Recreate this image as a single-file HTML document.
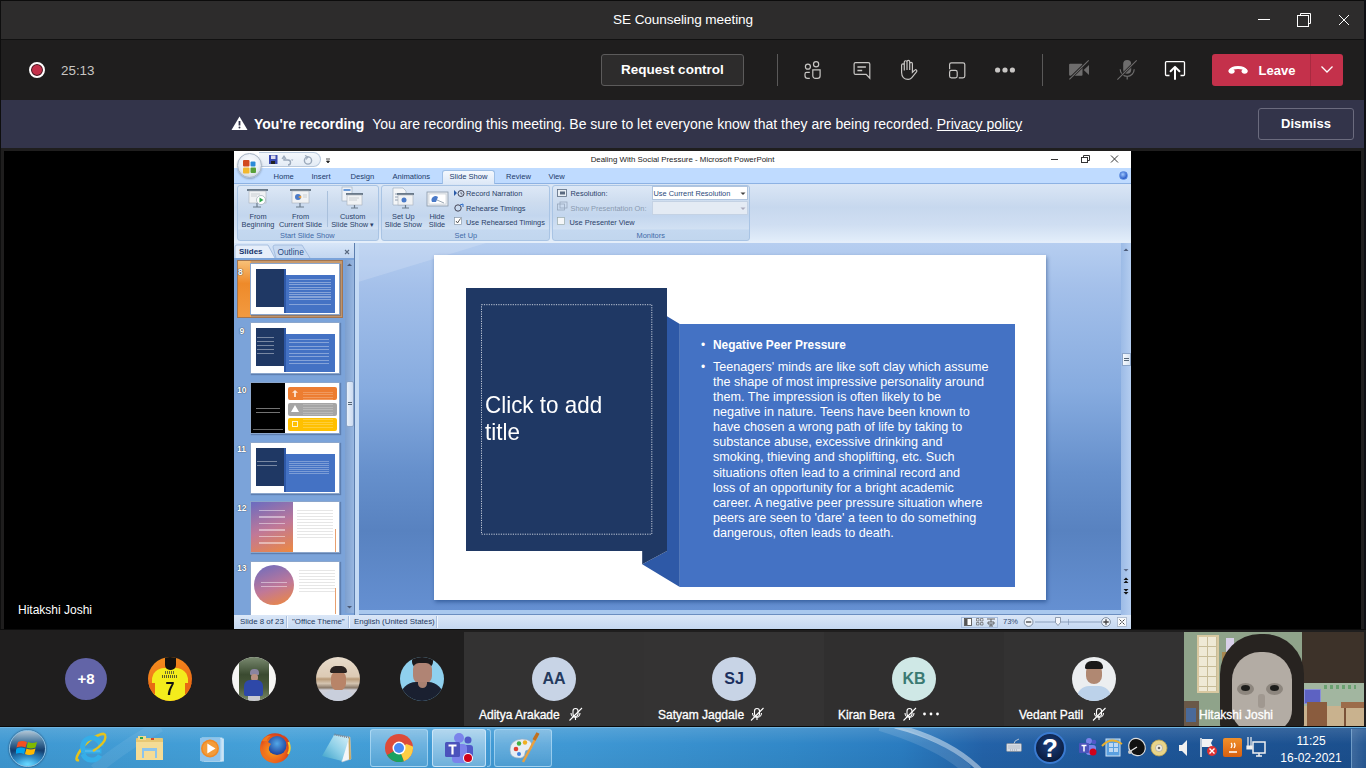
<!DOCTYPE html>
<html><head><meta charset="utf-8">
<style>
*{margin:0;padding:0;box-sizing:border-box}
html,body{width:1366px;height:768px;overflow:hidden;background:#1f1e1e;font-family:"Liberation Sans",sans-serif}
.a{position:absolute}
#title{left:0;top:0;width:1366px;height:40px;background:#2d2c2c;border-bottom:1px solid #111}
#title .t{left:0;width:1366px;top:12px;text-align:center;color:#fff;font-size:13.6px;letter-spacing:-0.1px}
#tool{left:0;top:40px;width:1366px;height:60px;background:#1f1e1e}
.btn{border:1px solid #5c5b5b;background:#2d2c2c;border-radius:3px;color:#fff;font-weight:bold;font-size:14px;text-align:center}
.div{width:1px;background:#5a5959}
#banner{left:0;top:100px;width:1366px;height:48px;background:#33344a}
#stage{left:4px;top:151px;width:1357px;height:478px;background:#000}
#strip{left:0;top:629px;width:1366px;height:99px;background:#1f1e1e;border-top:1px solid #0c0c0c}
.tile{top:632px;height:94px;width:180px;background:#333232}
.nm{color:#fff;font-size:12px;top:708px;-webkit-text-stroke:0.3px #fff}
.av{width:44px;height:44px;border-radius:50%;top:657px;text-align:center;line-height:44px;font-size:17px}
#task{left:0;top:727px;width:1366px;height:41px}
</style></head><body>
<div id="title" class="a"><div class="t a">SE Counseling meeting</div>
<svg class="a" style="left:1250px;top:0" width="116" height="40">
<line x1="8" y1="19.5" x2="20" y2="19.5" stroke="#fff" stroke-width="1"/>
<rect x="47.5" y="15.5" width="11" height="11" fill="none" stroke="#fff" stroke-width="1"/>
<path d="M50.5 15.5 V13.5 H60.5 V23.5 H58.5" fill="none" stroke="#fff" stroke-width="1"/>
<path d="M89 15 L99 25 M99 15 L89 25" stroke="#fff" stroke-width="1"/>
</svg>
</div>
<div id="tool" class="a">
<div class="a" style="left:29px;top:22px;width:16px;height:16px;border-radius:50%;border:2px solid #fff;background:#c4314b;box-shadow:inset 0 0 0 1px #3a1a20"></div>
<div class="a" style="left:61px;top:22.5px;color:#c8c6c4;font-size:13.4px">25:13</div>
<div class="a btn" style="left:601px;top:14px;width:143px;height:32px;line-height:30px;font-size:13.5px">Request control</div>
<div class="a div" style="left:777px;top:14px;height:32px"></div>
<svg class="a" style="left:789.2px;top:10px" width="240" height="40" fill="none" stroke="#c8c6c4" stroke-width="1.2">
<circle cx="18.9" cy="16.7" r="2.5"/><circle cx="27.1" cy="14.25" r="2.6"/>
<path d="M20.8 22.3 H17.6 a1.6 1.6 0 0 0 -1.6 1.6 V25.8 a2.6 2.6 0 0 0 2.6 2.6 H20.8"/>
<path d="M23.8 19.9 H31.1 V25.8 a2.6 2.6 0 0 1 -2.6 2.6 H26.4 a2.6 2.6 0 0 1 -2.6 -2.6 Z"/>
<path d="M65.1 14.1 a1.5 1.5 0 0 1 1.5 -1.5 h12.7 a1.5 1.5 0 0 1 1.5 1.5 V28.2 l-3.6 -3.8 H66.6 a1.5 1.5 0 0 1 -1.5 -1.5 Z"/>
<path d="M68.4 17 h8.5 M68.4 20.5 h4.8" stroke-width="1.3"/>
<path d="M119.2 29.4 C115.2 29.4 112.6 26.6 112.6 22.5 V15.3 a1.35 1.35 0 0 1 2.7 0 V20.5 M115.3 15.3 V12.1 a1.35 1.35 0 0 1 2.7 0 V20 M118 12.1 V11.7 a1.35 1.35 0 0 1 2.7 0 V20 M120.7 11.7 V13.7 a1.35 1.35 0 0 1 2.7 0 V22.3 l2.4 -2.2 a1.2 1.2 0 0 1 1.7 1.7 L122.6 27.8 C121.7 28.9 120.6 29.4 119.2 29.4"/>
<path d="M160.6 19.2 V14.6 a1.8 1.8 0 0 1 1.8 -1.8 H174 a1.8 1.8 0 0 1 1.8 1.8 V26 a1.8 1.8 0 0 1 -1.8 1.8 H169.8"/>
<rect x="160.6" y="20.4" width="7.6" height="7.4" rx="1.8"/>
<circle cx="208.6" cy="20" r="2.6" fill="#c8c6c4" stroke="none"/><circle cx="216" cy="20" r="2.6" fill="#c8c6c4" stroke="none"/><circle cx="223.4" cy="20" r="2.6" fill="#c8c6c4" stroke="none"/>
</svg>
<div class="a div" style="left:1042px;top:14px;height:32px"></div>
<svg class="a" style="left:1060px;top:10px" width="140" height="40">
<rect x="9.1" y="13.8" width="13.4" height="12" rx="1" fill="#6e6d6d"/>
<path d="M23.7 20 L29 15 V24.9 Z" fill="#6e6d6d"/>
<path d="M9.4 29.3 L28.7 10.3" stroke="#1f1e1e" stroke-width="2.6"/><path d="M9.4 29.3 L28.7 10.3" stroke="#6e6d6d" stroke-width="1.1"/>
<rect x="63.2" y="10" width="8" height="13.7" rx="4" fill="#6e6d6d"/>
<path d="M60.2 19.3 a7 7 0 0 0 14 0 M67.2 26.3 V29.6" fill="none" stroke="#6e6d6d" stroke-width="1.2"/>
<path d="M57.4 29.6 L76.7 10.3" stroke="#1f1e1e" stroke-width="2.6"/><path d="M57.4 29.6 L76.7 10.3" stroke="#6e6d6d" stroke-width="1.1"/>
<path d="M109.5 25.5 H106.5 a1 1 0 0 1 -1 -1 V12.6 a1 1 0 0 1 1 -1 H123.5 a1 1 0 0 1 1 1 V24.5 a1 1 0 0 1 -1 1 H120.5" fill="none" stroke="#fff" stroke-width="1.3"/>
<path d="M115 29 V17.5 M110.6 21.3 L115 16.9 L119.4 21.3" fill="none" stroke="#fff" stroke-width="2" stroke-linecap="round" stroke-linejoin="round"/>
</svg>
<div class="a" style="left:1212px;top:14px;width:131px;height:32px;background:#c4314b;border-radius:3px"></div>
<div class="a" style="left:1310px;top:14px;width:1px;height:32px;background:#a82a40"></div>
<svg class="a" style="left:1225px;top:9.5px" width="30" height="32">
<path d="M5.2 20.5 C7.5 16.5 18.5 16.5 20.8 20.5" fill="none" stroke="#fff" stroke-width="3.2" stroke-linecap="round"/>
<ellipse cx="6.6" cy="21.3" rx="3" ry="2.4" fill="#fff"/><ellipse cx="19.6" cy="21.3" rx="3" ry="2.4" fill="#fff"/>
</svg>
<div class="a" style="left:1258.5px;top:22.5px;color:#fff;font-weight:bold;font-size:13px">Leave</div>
<svg class="a" style="left:1318px;top:22px" width="18" height="16"><path d="M3.5 4.5 l5.5 5.5 l5.5 -5.5" fill="none" stroke="#fff" stroke-width="1.3"/></svg>
</div>
<div id="banner" class="a">
<svg class="a" style="left:231px;top:16px" width="17" height="15"><path d="M8.5 0.5 L16.5 14 H0.5 Z" fill="#fff"/><path d="M8.5 5 v4.5" stroke="#33344a" stroke-width="1.8"/><circle cx="8.5" cy="11.5" r="1" fill="#33344a"/></svg>
<div class="a" style="left:254px;top:16px;color:#fff;font-size:14px;white-space:nowrap"><b>You're recording</b>&nbsp;&nbsp;You are recording this meeting. Be sure to let everyone know that they are being recorded. <u>Privacy policy</u></div>
<div class="a btn" style="left:1258px;top:8px;width:96px;height:32px;line-height:30px;font-size:13px;background:#33344a;border-color:#6b6b7e">Dismiss</div>
</div>
<div id="stage" class="a"></div>
<div class="a" style="left:0;top:0;width:1366px;height:1px;background:#0c0c0c"></div>
<div class="a" style="left:0;top:0;width:1px;height:728px;background:#0e0e0e"></div>
<div class="a" style="left:1364px;top:0;width:2px;height:728px;background:#0e0f14"></div>
<div class="a" style="left:18px;top:603px;color:#fff;font-size:12px">Hitakshi Joshi</div>
<div id="ppt" class="a" style="left:234px;top:151px;width:897px;height:478px;background:#c4d6ee;overflow:hidden;font-family:'Liberation Sans',sans-serif;color:#15428b">
<style>
#ppt .a{position:absolute}
#ppt .tb{font-size:7.6px;top:20.6px;color:#203a6a;white-space:nowrap}
#ppt .rl{font-size:7.4px;color:#2a3f68;white-space:nowrap;line-height:8px}
#ppt .grp{top:34px;height:56px;border:1px solid #a9c4e4;border-radius:3px;background:linear-gradient(#dde8f6 0,#cddcef 30%,#c3d6ee 55%,#d2e1f3 80%,#c4d8f0 81%,#c1d6ee 100%)}
#ppt .gl{font-size:7.4px;color:#3f6aa8;top:80px;white-space:nowrap}
#ppt .th{background:#fff;border:1px solid #8ba6cc;box-shadow:1px 1px 1px rgba(40,60,100,0.35);width:90px;height:52px;left:16px;overflow:hidden}
#ppt .num{left:5px;font-size:8.6px;font-weight:bold;color:#fff;text-shadow:0 0 1px #345,0 0 1px #345}
#ppt .bl{white-space:nowrap;color:#fff;font-size:12.6px;line-height:15.15px;left:479px}
</style>
<!-- title bar -->
<div class="a" style="left:0;top:0;width:897px;height:17px;background:#fff"></div>
<div class="a" style="top:4px;width:897px;text-align:center;font-size:7.9px;color:#1a1a1a;left:0px">Dealing With Social Pressure - Microsoft PowerPoint</div>
<svg class="a" style="left:810px;top:0" width="87" height="17">
<path d="M7 8.5 h7" stroke="#333" stroke-width="1"/>
<rect x="37.5" y="6.5" width="6" height="5" fill="none" stroke="#333"/><path d="M39.5 6.5 v-2 h6 v5 h-2" fill="none" stroke="#333"/>
<path d="M67 4.5 l7 7 M74 4.5 l-7 7" stroke="#333" stroke-width="1"/>
</svg>
<!-- tab bar -->
<div class="a" style="left:0;top:17px;width:897px;height:16px;background:#bfdbff;border-bottom:1px solid #8db2e3"></div>
<div class="a" style="left:208px;top:19px;width:53px;height:15px;background:linear-gradient(#f4f8fd,#dbe7f6);border:1px solid #9ebfe6;border-bottom:none;border-radius:3px 3px 0 0"></div>
<div class="a tb" style="left:39.5px">Home</div>
<div class="a tb" style="left:77.5px">Insert</div>
<div class="a tb" style="left:116.5px">Design</div>
<div class="a tb" style="left:158.5px">Animations</div>
<div class="a tb" style="left:215.5px">Slide Show</div>
<div class="a tb" style="left:272px">Review</div>
<div class="a tb" style="left:314.5px">View</div>
<div class="a" style="left:885px;top:20px;width:9px;height:9px;border-radius:50%;background:radial-gradient(circle at 40% 35%,#9fc8ff,#2a5cc8 70%);border:1px solid #5a8ae0"></div>
<!-- QAT -->
<div class="a" style="left:25px;top:1px;width:62px;height:15px;border:1px solid #b9c9dc;border-left:none;border-radius:0 8px 8px 0;background:linear-gradient(#f4f8fc,#e4ecf6)"></div>
<svg class="a" style="left:34px;top:3px" width="62" height="12">
<rect x="1" y="1" width="8.5" height="9" fill="#3a4ab0"/><rect x="3" y="1.5" width="4.5" height="3.5" fill="#dde"/><rect x="3" y="7" width="4" height="3" fill="#222"/>
<path d="M16 3 v3 h4 a2.5 2.5 0 0 1 0 5" fill="none" stroke="#9aa8ba" stroke-width="1.4"/><path d="M14 5 l2 -3 l2 3" fill="none" stroke="#9aa8ba" stroke-width="1.2"/>
<path d="M23 5.5 l1.2 1.5 l1.2 -1.5z" fill="#9aa8ba"/>
<circle cx="40" cy="6.5" r="3.6" fill="none" stroke="#9aa8ba" stroke-width="1.4"/><path d="M37 1.5 l3 1.5 l-2 2.5" fill="none" stroke="#9aa8ba" stroke-width="1.2"/>
<path d="M58 5 h4 M58.5 7 l1.5 2 l1.5 -2z" stroke="#222" fill="#222" stroke-width="0.8"/>
</svg>
<!-- office orb -->
<div class="a" style="left:3px;top:2px;width:25px;height:25px;border-radius:50%;background:radial-gradient(circle at 50% 40%,#fff 0,#eef2f8 50%,#b8c4d2 100%);border:1px solid #a8b4c4;box-shadow:0 1px 2px rgba(0,0,0,0.25)"></div>
<svg class="a" style="left:8px;top:8px" width="16" height="16">
<rect x="1" y="1" width="6.5" height="6.5" rx="1" fill="#d2491e"/><rect x="8.5" y="2.5" width="5" height="5" rx="1" fill="#2a8ad8"/>
<rect x="1" y="8.5" width="6.5" height="6" rx="1" fill="#f2b830"/><rect x="8.5" y="8.5" width="5.5" height="5.5" rx="1" fill="#58a038"/>
</svg>
<!-- ribbon -->
<div class="a" style="left:0;top:33px;width:897px;height:58px;background:linear-gradient(#dae6f5 0,#c7d8ee 40%,#cfdef2 70%,#e3eefa 100%)"></div>
<div class="a grp" style="left:2.5px;width:142px"></div>
<div class="a grp" style="left:146.5px;width:169.5px"></div>
<div class="a grp" style="left:318px;width:197.5px"></div>
<div class="a" style="left:93px;top:40px;width:1px;height:36px;background:#a9c0dc"></div>
<div class="a gl" style="left:46px">Start Slide Show</div>
<div class="a gl" style="left:220.5px">Set Up</div>
<div class="a gl" style="left:402.5px">Monitors</div>
<svg class="a" style="left:0;top:33px" width="520" height="45">
 <!-- from beginning -->
 <g transform="translate(13,4)"><rect x="0" y="1" width="21" height="2" fill="#6a7a8a"/><rect x="2" y="3" width="17" height="12" fill="#f0f2f4" stroke="#a8b0b8" stroke-width="0.6"/><path d="M4 6h9M4 8h6" stroke="#c0c6cc" stroke-width="0.8"/><path d="M10 15 v4 M6 19 h8" stroke="#6a7a8a" stroke-width="1.2"/><circle cx="14" cy="12" r="4.5" fill="#fff" stroke="#8a9aaa" stroke-width="0.6"/><path d="M12.5 9.5 l4 2.5 l-4 2.5z" fill="#2ea84a"/></g>
 <!-- from current -->
 <g transform="translate(56,4)"><rect x="0" y="1" width="21" height="2" fill="#6a7a8a"/><rect x="2" y="3" width="17" height="12" fill="#f0f2f4" stroke="#a8b0b8" stroke-width="0.6"/><circle cx="8" cy="9" r="3" fill="#4a7ac8"/><path d="M8 9 l3 -1.5 a3 3 0 0 1 0 3z" fill="#e8a040"/><path d="M13 7h4M13 9h4" stroke="#c0c6cc" stroke-width="0.8"/><path d="M10 15 v4 M6 19 h8" stroke="#6a7a8a" stroke-width="1.2"/></g>
 <!-- custom -->
 <g transform="translate(107,2)"><rect x="1" y="1" width="10" height="14" fill="#eef2f8" stroke="#98a8ba" stroke-width="0.6"/><rect x="2.5" y="3" width="7" height="2" fill="#6a9ad8"/><rect x="5" y="7" width="17" height="2" fill="#6a7a8a"/><rect x="6" y="9" width="15" height="10" fill="#f0f2f4" stroke="#a8b0b8" stroke-width="0.6"/><path d="M8 12h10M8 14h8" stroke="#c0c6cc" stroke-width="0.8"/><path d="M13.5 19 v3 M10 22 h7" stroke="#6a7a8a" stroke-width="1.2"/></g>
 <!-- set up -->
 <g transform="translate(158,3)"><path d="M1 1 h10 l3 3 v14 h-13z" fill="#f4f6f8" stroke="#98a8ba" stroke-width="0.6"/><path d="M3 7h3M3 10h3M3 13h3" stroke="#7a8aa0" stroke-width="0.8"/><rect x="5" y="6" width="17" height="2" fill="#6a7a8a"/><rect x="6" y="8" width="15" height="10" fill="#f0f2f4" stroke="#a8b0b8" stroke-width="0.6"/><circle cx="12" cy="13" r="2.5" fill="#4a7ac8"/><path d="M13.5 18 v3 M10 21 h7" stroke="#6a7a8a" stroke-width="1.2"/></g>
 <!-- hide -->
 <g transform="translate(193,8)"><rect x="0" y="0" width="21" height="14" fill="#e8ecf0" stroke="#8a9aaa" stroke-width="0.8"/><rect x="2" y="2" width="17" height="10" fill="#fff" stroke="#b8c0c8" stroke-width="0.5"/><path d="M5 10 a4 4 0 0 1 6 -5 l-2 5z" fill="#4a7ac8"/><path d="M10 8 l7 3" stroke="#8090a0" stroke-width="0.8"/></g>
 <!-- small row icons -->
 <g transform="translate(220,5)"><path d="M0 1 l3 3 l-3 3z" fill="#2a5aa8"/><circle cx="7" cy="4.5" r="3" fill="none" stroke="#445" stroke-width="1"/><path d="M7 3 v2 h1.5" stroke="#445" stroke-width="0.7" fill="none"/></g>
 <g transform="translate(220,19)"><circle cx="4" cy="5" r="3.2" fill="none" stroke="#445" stroke-width="1"/><path d="M6 2 l3 -1 l0 3" fill="none" stroke="#2a6ac8" stroke-width="1"/></g>
 <rect x="220.5" y="33.5" width="7" height="7" fill="#fff" stroke="#8a9aaa" stroke-width="0.7"/><path d="M222 37 l1.5 2 l3 -4.5" stroke="#333" stroke-width="0.8" fill="none"/>
 <rect x="323.5" y="5.5" width="9" height="7" fill="#e8eef4" stroke="#5a6a80" stroke-width="0.8"/><rect x="326" y="7.5" width="5" height="3" fill="#5a6a80"/>
 <g opacity="0.45"><rect x="323.5" y="20" width="7" height="6" fill="none" stroke="#5a6a80" stroke-width="0.8"/><rect x="326" y="18" width="7" height="6" fill="none" stroke="#5a6a80" stroke-width="0.8"/></g>
 <rect x="323.5" y="33.5" width="7" height="7" fill="#f4f6f8" stroke="#9aa" stroke-width="0.7"/>
</svg>
<div class="a rl" style="left:-6px;top:62px;width:60px;text-align:center">From<br>Beginning</div>
<div class="a rl" style="left:36.5px;top:62px;width:60px;text-align:center">From<br>Current Slide</div>
<div class="a rl" style="left:88.7px;top:62px;width:60px;text-align:center">Custom<br>Slide Show ▾</div>
<div class="a rl" style="left:139.3px;top:62px;width:60px;text-align:center">Set Up<br>Slide Show</div>
<div class="a rl" style="left:173px;top:62px;width:60px;text-align:center">Hide<br>Slide</div>
<div class="a rl" style="left:232px;top:39px">Record Narration</div>
<div class="a rl" style="left:232px;top:54px">Rehearse Timings</div>
<div class="a rl" style="left:232px;top:68px">Use Rehearsed Timings</div>
<div class="a rl" style="left:336.5px;top:39px">Resolution:</div>
<div class="a rl" style="left:336.5px;top:54px;color:#8a9ab0">Show Presentation On:</div>
<div class="a rl" style="left:335.5px;top:68px">Use Presenter View</div>
<div class="a" style="left:417.5px;top:35px;width:96px;height:14px;background:#fff;border:1px solid #b0c4de"></div>
<div class="a rl" style="left:419.5px;top:39px;color:#2a4a7a">Use Current Resolution</div>
<svg class="a" style="left:505px;top:40px" width="8" height="6"><path d="M1.5 1.5 l2.5 2.5 l2.5 -2.5z" fill="#444"/></svg>
<div class="a" style="left:417.5px;top:50px;width:96px;height:14px;background:#e4ebf4;border:1px solid #c4d2e4"></div>
<svg class="a" style="left:505px;top:55px" width="8" height="6"><path d="M1.5 1.5 l2.5 2.5 l2.5 -2.5z" fill="#aab"/></svg>
<div class="a" style="left:0;top:90px;width:897px;height:2px;background:#e4eefa"></div>
<!-- slides pane -->
<div class="a" style="left:0;top:92px;width:121px;height:372px;background:#7ba3d9"></div>
<div class="a" style="left:0;top:92px;width:121px;height:15px;background:linear-gradient(#d8e6f8,#c2d6f0)"></div>
<svg class="a" style="left:0;top:92px" width="121" height="16">
<path d="M1 15 V4 a2 2 0 0 1 2 -2 h31 l7 13" fill="#e6eefa" stroke="#9cb6da" stroke-width="0.8"/>
<path d="M42 15 l-3 -11 a2 2 0 0 1 2 -2 h27 l8 13" fill="#c8daf2" stroke="#9cb6da" stroke-width="0.8"/>
<path d="M111 7 l4 4 M115 7 l-4 4" stroke="#5a6a80" stroke-width="1.1"/>
</svg>
<div class="a" style="left:5px;top:95.5px;font-size:8px;font-weight:bold;color:#15316b">Slides</div>
<div class="a" style="left:43.5px;top:95.5px;font-size:8.3px;color:#2a4a80">Outline</div>
<div class="a" style="left:120px;top:92px;width:1px;height:372px;background:#5c7eae"></div>
<div class="a" style="left:121px;top:92px;width:4px;height:372px;background:#c4daf4"></div>
<!-- pane scrollbar -->
<div class="a" style="left:111px;top:109px;width:9px;height:353px;background:linear-gradient(90deg,#7d9fce,#97b6e0)"></div>
<svg class="a" style="left:111px;top:109px" width="9" height="353"><path d="M2 6 l2.5 -2.5 l2.5 2.5z" fill="#4a5a78"/><path d="M2 346 l2.5 2.5 l2.5 -2.5z" fill="#4a5a78"/></svg>
<div class="a" style="left:112px;top:230px;width:8px;height:46px;background:linear-gradient(90deg,#e8f0fa,#cbdaf0);border:1px solid #8aa4c8;border-radius:2px"></div>
<div class="a" style="left:114px;top:251px;width:4px;height:3px;border-top:1px solid #567;border-bottom:1px solid #567"></div>
<!-- thumbnails -->
<div class="a" style="left:2.5px;top:109px;width:106px;height:58px;background:linear-gradient(90deg,#f08a26 0,#f5a850 12%,#c89a6c 13%,#c89a6c 100%);border:1px solid #a37550"></div>
<div class="a" style="left:3.5px;top:110px;width:12px;height:56px;background:linear-gradient(#f8c078,#ee8a2a 40%,#f29a40)"></div>
<div class="a num" style="top:116px;left:4px">8</div>
<div class="a th" style="top:111.5px;left:15.5px;width:90px;height:52.5px">
 <div class="a" style="left:5px;top:5px;width:29px;height:38px;background:#1f3864"></div>
 <div class="a" style="left:35px;top:11px;width:49px;height:38px;background:#4472c4"></div>
 <div class="a" style="left:33px;top:5px;width:2px;height:44px;background:#2e58a6"></div>
 <div class="a" style="left:38px;top:14px;width:42px;height:28px;background:repeating-linear-gradient(rgba(255,255,255,0) 0 1px,rgba(255,255,255,0.35) 1px 2px,rgba(255,255,255,0) 2px 2.5px)"></div>
</div>
<div class="a num" style="top:175px;left:5.5px">9</div>
<div class="a th" style="top:171px">
 <div class="a" style="left:5px;top:5px;width:29px;height:38px;background:#1f3864"></div>
 <div class="a" style="left:35px;top:11px;width:49px;height:38px;background:#4472c4"></div>
 <div class="a" style="left:33px;top:5px;width:2px;height:44px;background:#2e58a6"></div>
 <div class="a" style="left:6px;top:12px;width:17px;height:21px;background:repeating-linear-gradient(rgba(255,255,255,0) 0 2.5px,rgba(255,255,255,0.4) 2.5px 3.5px,rgba(255,255,255,0) 3.5px 4px)"></div>
 <div class="a" style="left:38px;top:14px;width:40px;height:27px;background:repeating-linear-gradient(rgba(255,255,255,0) 0 2px,rgba(255,255,255,0.35) 2px 3px,rgba(255,255,255,0) 3px 3.5px)"></div>
</div>
<div class="a num" style="top:234px;left:3px">10</div>
<div class="a th" style="top:231px">
 <div class="a" style="left:0;top:0;width:34px;height:52px;background:#000"></div>
 <div class="a" style="left:2px;top:46px;width:30px;height:1px;background:#666"></div>
 <div class="a" style="left:5px;top:24px;width:24px;height:7px;background:repeating-linear-gradient(rgba(255,255,255,0) 0 1px,rgba(255,255,255,0.45) 1px 2px,rgba(255,255,255,0) 2px 4px)"></div>
 <div class="a" style="left:37px;top:4px;width:49px;height:13px;background:#ed7d31;border-radius:2px"></div>
 <div class="a" style="left:37px;top:20px;width:49px;height:13px;background:#a5a5a5;border-radius:2px"></div>
 <div class="a" style="left:37px;top:35px;width:49px;height:13px;background:#ffc000;border-radius:2px"></div>
 <div class="a" style="left:52px;top:7px;width:30px;height:38px;background:repeating-linear-gradient(rgba(255,255,255,0) 0 1.5px,rgba(255,255,255,0.22) 1.5px 2.5px)"></div><div class="a" style="left:41px;top:7px;width:6px;height:7px;background:rgba(255,255,255,0.8);clip-path:polygon(50% 0,100% 40%,65% 40%,65% 100%,35% 100%,35% 40%,0 40%)"></div><div class="a" style="left:40px;top:22px;width:8px;height:7px;background:#fff;clip-path:polygon(50% 0,100% 100%,0 100%)"></div><div class="a" style="left:41px;top:38px;width:6px;height:6px;border:1px solid rgba(255,255,255,0.8)"></div>
</div>
<div class="a num" style="top:293px;left:3px">11</div>
<div class="a th" style="top:290.5px">
 <div class="a" style="left:5px;top:5px;width:29px;height:38px;background:#1f3864"></div>
 <div class="a" style="left:35px;top:11px;width:49px;height:38px;background:#4472c4"></div>
 <div class="a" style="left:33px;top:5px;width:2px;height:44px;background:#2e58a6"></div>
 <div class="a" style="left:6px;top:17px;width:20px;height:8px;background:repeating-linear-gradient(rgba(255,255,255,0) 0 1px,rgba(255,255,255,0.4) 1px 2px,rgba(255,255,255,0) 2px 4px)"></div>
 <div class="a" style="left:38px;top:17px;width:40px;height:14px;background:repeating-linear-gradient(rgba(255,255,255,0) 0 1px,rgba(255,255,255,0.3) 1px 2px)"></div>
</div>
<div class="a num" style="top:352px;left:3px">12</div>
<div class="a th" style="top:350px">
 <div class="a" style="left:0;top:0;width:42px;height:52px;background:linear-gradient(160deg,#6a6cc0 0,#c07898 50%,#f08a3a 100%)"></div>
 <div class="a" style="left:8px;top:5px;width:26px;height:40px;background:repeating-linear-gradient(transparent 0 3px,rgba(255,255,255,0.45) 3px 4.5px,transparent 4.5px 6.5px)"></div>
 <div class="a" style="left:46px;top:6px;width:36px;height:32px;background:repeating-linear-gradient(#fff 0 2px,#e6e6e6 2px 3px)"></div>
 <div class="a" style="left:84px;top:27px;width:1px;height:23px;background:#e8a070"></div>
</div>
<div class="a num" style="top:412px;left:3px">13</div>
<div class="a th" style="top:409.5px;height:56px">
 <div class="a" style="left:3px;top:3px;width:40px;height:40px;border-radius:50%;background:linear-gradient(160deg,#6a6cc0 0,#c07898 55%,#f08a3a 100%)"></div>
 <div class="a" style="left:10px;top:19px;width:26px;height:8px;background:repeating-linear-gradient(transparent 0 1px,rgba(255,255,255,0.45) 1px 2px,transparent 2px 4px)"></div>
 <div class="a" style="left:48px;top:6px;width:36px;height:26px;background:repeating-linear-gradient(#fff 0 2px,#e6e6e6 2px 3px)"></div>
 <div class="a" style="left:84px;top:26px;width:1px;height:26px;background:#e8a070"></div>
</div>
<!-- main area -->
<div class="a" style="left:125px;top:92px;width:762px;height:369px;background:linear-gradient(180deg,#b6cef0 0,#a4c0ea 12%,#86abdf 40%,#6690cc 62%,#5882c0 78%,#6590d2 100%);overflow:hidden">
 <div class="a" style="left:-200px;top:-300px;width:900px;height:400px;background:rgba(255,255,255,0.16);transform:rotate(-17deg);transform-origin:0 100%"></div>
</div>
<div class="a" style="left:125px;top:459px;width:762px;height:5px;background:#a9c8ee;border-bottom:1px solid #6b8ec0"></div>
<!-- main scrollbar -->
<div class="a" style="left:887px;top:92px;width:10px;height:372px;background:linear-gradient(90deg,#9cbbe6,#b4cdf0)"></div>
<svg class="a" style="left:887px;top:92px" width="10" height="372">
<path d="M2.5 8 l2.5 -2.5 l2.5 2.5z" fill="#4a5a78"/><path d="M2.5 326 l2.5 2.5 l2.5 -2.5z" fill="#5a6a88"/>
<path d="M2.5 337 l2.5 -2.5 l2.5 2.5z M2.5 340 l2.5 -2.5 l2.5 2.5z" fill="#111"/><path d="M2.5 346 l2.5 2.5 l2.5 -2.5z M2.5 349 l2.5 2.5 l2.5 -2.5z" fill="#111"/>
</svg>
<div class="a" style="left:887.5px;top:201.5px;width:9px;height:13px;background:linear-gradient(90deg,#f4f8fc,#d8e4f2);border:1px solid #8aa4c8"></div>
<div class="a" style="left:889.5px;top:207px;width:5px;height:3px;border-top:1px solid #567;border-bottom:1px solid #567"></div>
<!-- slide -->
<div class="a" style="left:200px;top:104px;width:612px;height:345px;background:#fff;box-shadow:1px 2px 4px rgba(0,40,100,0.45)"></div>
<svg class="a" style="left:200px;top:104px" width="612" height="345">
<rect x="32" y="33" width="201" height="263" fill="#1f3864"/>
<polygon points="233,61.3 245.8,69.1 245.8,332 208.2,309.2 233,296" fill="#2e59a7"/>
<polygon points="208.2,296 208.2,309.2 233,296" fill="#1f3864"/>
<rect x="245.8" y="69" width="335.2" height="263" fill="#4472c4"/>
<rect x="47.5" y="49.7" width="170.3" height="229.5" fill="none" stroke="#d8dee8" stroke-width="0.9" stroke-dasharray="1.2 1.2"/>
</svg>
<div class="a" style="left:251px;top:241px;color:#fff;font-size:23.6px;line-height:27px;white-space:nowrap;transform:scaleX(0.95);transform-origin:0 0">Click to add<br>title</div>
<div class="a" style="left:467px;top:187px;color:#fff;font-size:12px">•</div>
<div class="a bl" style="top:187px;font-weight:bold;font-size:11.9px">Negative Peer Pressure</div>
<div class="a" style="left:467px;top:209px;color:#fff;font-size:12px">•</div>
<div class="a bl" style="top:208.5px">Teenagers' minds are like soft clay which assume<br>the shape of most impressive personality around<br>them. The impression is often likely to be<br>negative in nature. Teens have been known to<br>have chosen a wrong path of life by taking to<br>substance abuse, excessive drinking and<br>smoking, thieving and shoplifting, etc. Such<br>situations often lead to a criminal record and<br>loss of an opportunity for a bright academic<br>career. A negative peer pressure situation where<br>peers are seen to 'dare' a teen to do something<br>dangerous, often leads to death.</div>
<!-- status bar -->
<div class="a" style="left:0;top:464px;width:897px;height:14px;background:linear-gradient(#dbe7f7,#c4d7f0)"></div>
<div class="a" style="left:6px;top:466px;font-size:7.9px;color:#1f3a62;white-space:nowrap">Slide 8 of 23</div>
<div class="a" style="left:58px;top:466px;font-size:7.9px;color:#1f3a62;white-space:nowrap">"Office Theme"</div>
<div class="a" style="left:120px;top:466px;font-size:7.9px;color:#1f3a62;white-space:nowrap">English (United States)</div>
<div class="a" style="left:52px;top:465px;width:1px;height:12px;background:#a8bede;box-shadow:1px 0 #f0f6fd"></div>
<div class="a" style="left:113.5px;top:465px;width:1px;height:12px;background:#a8bede;box-shadow:1px 0 #f0f6fd"></div>
<div class="a" style="left:201.5px;top:465px;width:1px;height:12px;background:#a8bede;box-shadow:1px 0 #f0f6fd"></div>
<div class="a" style="left:727px;top:465.5px;width:37px;height:11px;background:linear-gradient(#e8f0fa,#c8daf0);border:1px solid #a8bede"></div>
<svg class="a" style="left:727px;top:464px" width="170" height="14">
<rect x="3.5" y="3.5" width="7" height="7" fill="#fff" stroke="#555" stroke-width="0.9"/><rect x="4" y="4" width="2.5" height="6" fill="#555"/>
<path d="M15.5 3.5h2.5v2.5h-2.5zM19.5 3.5h2.5v2.5h-2.5zM15.5 7.5h2.5v2.5h-2.5zM19.5 7.5h2.5v2.5h-2.5z" fill="none" stroke="#666" stroke-width="0.7"/>
<path d="M26 4 h8 M30 4 v3 M27 7 h6 v2 h-6z M30 9 v2 M28 11 h4" stroke="#555" stroke-width="0.9" fill="none"/>
<circle cx="67.6" cy="7" r="4.4" fill="#eef3f9" stroke="#6a7a90" stroke-width="0.8"/><path d="M65 7 h5.2" stroke="#444" stroke-width="1.3"/>
<path d="M74 7 h66" stroke="#7b8fae" stroke-width="0.8"/><path d="M107.5 4 v6" stroke="#7b8fae" stroke-width="0.6"/>
<path d="M94.5 2.5 h5 v5 l-2.5 3 l-2.5 -3z" fill="#f4f6fa" stroke="#6a7a90" stroke-width="0.7"/>
<circle cx="145" cy="7" r="4.4" fill="#eef3f9" stroke="#6a7a90" stroke-width="0.8"/><path d="M142.3 7 h5.4 M145 4.3 v5.4" stroke="#444" stroke-width="1.3"/>
<rect x="156.5" y="2.5" width="9" height="9" fill="#f8fafc" stroke="#9aaac0" stroke-width="0.7"/><path d="M158.5 4.5 l2 2 M163.5 4.5 l-2 2 M158.5 9.5 l2 -2 M163.5 9.5 l-2 -2" stroke="#444" stroke-width="1"/>
</svg>
<div class="a" style="left:769px;top:466px;font-size:7.5px;color:#2f4a73">73%</div>
</div>
<div id="strip" class="a"></div>
<div class="a av" style="left:65px;top:658px;width:42px;height:42px;line-height:42px;background:#6264a7;color:#fff;font-weight:bold;font-size:15px">+8</div>
<div class="a av" style="filter:blur(0.35px);left:148px;background:linear-gradient(160deg,#f59020,#e85c10);overflow:hidden">
 <div class="a" style="left:4px;top:11px;width:36px;height:40px;background:#f3ec1c;border-radius:12px 12px 0 0"></div>
 <div class="a" style="left:0px;top:26px;width:7px;height:20px;background:#e86a14"></div>
 <div class="a" style="left:37px;top:26px;width:7px;height:20px;background:#e86a14"></div>
 <div class="a" style="left:17px;top:-2px;width:11px;height:15px;background:#141210;border-radius:3px 3px 5px 5px"></div>
 <div class="a" style="left:17px;top:14px;width:10px;height:3px;background:repeating-linear-gradient(90deg,#6a6a30 0 1px,transparent 1px 2px)"></div><div class="a" style="left:14px;top:18px;width:16px;height:3px;background:repeating-linear-gradient(90deg,#5a5a28 0 1px,transparent 1px 2px)"></div>
 <div class="a" style="left:16.5px;top:21px;font-size:18px;font-weight:bold;color:#111;line-height:22px;transform:scaleX(0.9)">7</div>
</div>
<div class="a av" style="filter:blur(0.35px);left:232px;background:#f6f6f4;overflow:hidden">
 <div class="a" style="left:7px;top:0;width:30px;height:44px;background:linear-gradient(#7a8a70,#3a4a30 40%,#4a5a3a 70%,#7a8a6a)"></div>
 <div class="a" style="left:18px;top:12px;width:9px;height:6px;background:#8a84a0;border-radius:4px 4px 1px 1px"></div>
 <div class="a" style="left:19px;top:17px;width:7px;height:7px;background:#b89080;border-radius:3px"></div>
 <div class="a" style="left:12px;top:23px;width:19px;height:16px;background:#2e48a8;border-radius:6px 6px 2px 2px"></div>
 <div class="a" style="left:16px;top:39px;width:12px;height:5px;background:#c8c8d0"></div>
</div>
<div class="a av" style="filter:blur(0.35px);left:316px;background:linear-gradient(#e8dccc 0,#dccab4 45%,#b89a78 50%,#d4c4b0 60%,#8a7a6a 70%,#cfd0d8 75%);overflow:hidden">
 <div class="a" style="left:15px;top:14px;width:15px;height:20px;background:#b88468;border-radius:7px 7px 8px 8px"></div>
 <div class="a" style="left:14px;top:9px;width:17px;height:7px;background:#2a2220;border-radius:8px 8px 2px 2px"></div>
 <div class="a" style="left:6px;top:33px;width:32px;height:14px;background:#c9cfdc;border-radius:10px 10px 0 0"></div>
</div>
<div class="a av" style="filter:blur(0.35px);left:400px;background:#8fd0ee;overflow:hidden">
 <div class="a" style="left:12px;top:0px;width:21px;height:11px;background:#1c1a1c;border-radius:4px 4px 6px 6px"></div>
 <div class="a" style="left:13px;top:6px;width:19px;height:22px;background:#b08474;border-radius:6px 6px 9px 9px"></div>
 <div class="a" style="left:0px;top:25px;width:44px;height:20px;background:#1a2030;border-radius:16px 16px 0 0"></div>
 <div class="a" style="left:18px;top:25px;width:9px;height:6px;background:#a88070;border-radius:0 0 5px 5px"></div>
</div>
<div class="a tile" style="left:464px"></div>
<div class="a tile" style="left:644px;background:#343333"></div>
<div class="a tile" style="left:824px;background:#302f2f"></div>
<div class="a tile" style="left:1004px;background:#333232"></div>
<div class="a av" style="left:532px;background:#c8d4e6;color:#243a5e;font-weight:bold;font-size:16px">AA</div>
<div class="a av" style="left:712px;background:#c8d4e6;color:#1b2f5e;font-weight:bold;font-size:16px">SJ</div>
<div class="a av" style="left:892px;background:#cfe8e6;color:#3b7a72;font-weight:bold;font-size:16px">KB</div>
<div class="a av" style="filter:blur(0.35px);left:1072px;background:#eceef0;overflow:hidden">
 <div class="a" style="left:14px;top:7px;width:16px;height:20px;background:#b08872;border-radius:8px"></div>
 <div class="a" style="left:13px;top:4px;width:18px;height:8px;background:#1b1a1a;border-radius:8px 8px 2px 2px"></div>
 <div class="a" style="left:5px;top:29px;width:34px;height:20px;background:#bcd2ea;border-radius:12px 12px 0 0"></div>
</div>
<div class="a nm" style="left:479px">Aditya Arakade</div>
<div class="a nm" style="left:658px">Satyam Jagdale</div>
<div class="a nm" style="left:838px">Kiran Bera</div>
<div class="a nm" style="left:1019px">Vedant Patil</div>
<svg class="a" style="left:0;top:700px" width="1366" height="26" fill="none" stroke="#fff" stroke-width="1.1">
<g id="mic"><rect x="573" y="8.5" width="5" height="8" rx="2.5"/><path d="M571 13 a4.5 4.5 0 0 0 9 0 M575.5 18 v2 M569.5 20.5 L582 8"/></g>
<use href="#mic" x="181.5"/><use href="#mic" x="334"/><use href="#mic" x="523.5"/>
<circle cx="924.5" cy="14" r="1.4" fill="#fff" stroke="none"/><circle cx="931" cy="14" r="1.4" fill="#fff" stroke="none"/><circle cx="937.5" cy="14" r="1.4" fill="#fff" stroke="none"/>
</svg>
<div class="a" style="left:1184px;top:632px;width:180px;height:94px;background:#8fa38a;overflow:hidden;filter:blur(0.5px)">
 <div class="a" style="left:118px;top:0;width:62px;height:51px;background:#3d3229"></div>
 <div class="a" style="left:118px;top:51px;width:62px;height:23px;background:#a2b6a0"></div>
 <div class="a" style="left:140px;top:53px;width:32px;height:4px;background:repeating-linear-gradient(90deg,#6aa070 0 3px,transparent 3px 6px)"></div>
 <div class="a" style="left:120px;top:57px;width:17px;height:15px;background:#5d62c2;border:1px solid #8a90d8"></div>
 <div class="a" style="left:118px;top:74px;width:62px;height:20px;background:#c9b28e"></div>
 <div class="a" style="left:123px;top:70px;width:20px;height:24px;background:#8a5c3e"></div>
 <div class="a" style="left:157px;top:70px;width:23px;height:6px;background:#9c6c4a"></div>
 <div class="a" style="left:160px;top:76px;width:2px;height:18px;background:#7a5238"></div>
 <div class="a" style="left:13px;top:3px;width:22px;height:58px;background:#efe9d6;border:2px solid #d8c8a0"></div>
 <div class="a" style="left:15px;top:5px;width:18px;height:54px;background:repeating-linear-gradient(transparent 0 9px,#c8bc98 9px 10px),repeating-linear-gradient(90deg,transparent 0 8px,#c8bc98 8px 9px)"></div>
 <div class="a" style="left:42px;top:6px;width:8px;height:14px;background:#d8d0e8"></div>
 <div class="a" style="left:38px;top:20px;width:9px;height:36px;background:#a88850"></div>
 <div class="a" style="left:0;top:69px;width:15px;height:25px;background:#6a5848"></div>
 <div class="a" style="left:2px;top:76px;width:10px;height:14px;background:#4a6a9a"></div>
 <div class="a" style="left:36px;top:2px;width:84px;height:96px;background:#272320;border-radius:40px 40px 6px 6px"></div>
 <div class="a" style="left:48px;top:20px;width:60px;height:80px;background:#b3aca4;border-radius:28px 28px 22px 22px"></div>
 <div class="a" style="left:53px;top:51px;width:17px;height:12px;background:#8d867e;border-radius:50%"></div>
 <div class="a" style="left:82px;top:51px;width:17px;height:12px;background:#8d867e;border-radius:50%"></div>
 <div class="a" style="left:57px;top:53px;width:9px;height:6px;background:#1e1e1c;border-radius:50%"></div>
 <div class="a" style="left:86px;top:53px;width:9px;height:6px;background:#1e1e1c;border-radius:50%"></div>
 <div class="a" style="left:74px;top:62px;width:7px;height:14px;background:#a09890;border-radius:3px"></div>
</div>
<div class="a nm" style="left:1199px;top:708px">Hitakshi Joshi</div>
<div id="task" class="a" style="background:linear-gradient(90deg,#3e98d2 0,#44a0d8 20%,#3f98d4 42%,#3188c8 58%,#2a7cc0 66%,#2362a8 72%,#1e5698 85%,#1b4f8d 100%);border-top:1px solid #6fb4e0;box-shadow:0 -1px 0 #0a0a0a">
 <div class="a" style="left:0;top:0;width:1366px;height:40px;background:linear-gradient(rgba(255,255,255,0.12),rgba(255,255,255,0.0) 40%,rgba(0,0,0,0.04))"></div>
 <svg class="a" style="left:0;top:0" width="1366" height="40">
  <path d="M895 -2 Q950 12 980 42" fill="none" stroke="rgba(255,255,255,0.45)" stroke-width="5"/>
  <path d="M880 -2 Q940 16 968 42" fill="none" stroke="rgba(255,255,255,0.12)" stroke-width="10"/>
  <path d="M95 42 Q120 20 160 -2" fill="none" stroke="rgba(255,255,255,0.07)" stroke-width="12"/>
 </svg>
</div>
<!-- start orb -->
<div class="a" style="left:9px;top:730px;width:37px;height:37px;border-radius:50%;background:radial-gradient(ellipse 70% 45% at 50% 95%,#6ad8ff 0,rgba(60,170,230,0.6) 50%,rgba(0,0,0,0) 100%),linear-gradient(#b0c4d4 0,#4a7aa0 30%,#143e6e 55%,#1a5a94 80%,#3aa8e0 100%);border:1px solid #8fc0e0;box-shadow:0 0 2px #1a3050"></div>
<svg class="a" style="left:16px;top:737px" width="24" height="22">
<path d="M2 5 q4 -2 9 0 l-1.5 5.5 q-4 -2 -9 0z" fill="#f25022"/>
<path d="M12 5 q4 2 9 0 l-1.5 5.5 q-5 2 -9 0z" fill="#7fba00"/>
<path d="M0.5 11.5 q4 -2 9 0 l-1.5 5.5 q-4 -2 -9 0z" fill="#00a4ef"/>
<path d="M10.5 11.5 q4 2 9 0 l-1.5 5.5 q-5 2 -9 0z" fill="#ffb900"/>
</svg>
<!-- IE -->
<svg class="a" style="left:73px;top:731px" width="34" height="34">
<path d="M6 29 C-1 31 8 16 17 9 C25 3 33 1 32 5" fill="none" stroke="#e6c31c" stroke-width="2.6"/>
<path d="M28.5 20 H10.5 A9.2 9.2 0 1 1 28 15.5 M27 24.5 A9.5 9.5 0 0 1 10 23" fill="none" stroke="#35aee8" stroke-width="5"/>
<path d="M12 20 H27" stroke="#fff" stroke-opacity="0.25" stroke-width="1"/>
<path d="M32 5 C34 9 27 16 20 20" fill="none" stroke="#e6c31c" stroke-width="2.4"/>
</svg>
<!-- folder -->
<svg class="a" style="left:134px;top:734px" width="32" height="28">
<rect x="2" y="4" width="27" height="22" rx="1" fill="#e8c874"/>
<rect x="4" y="2" width="8" height="4" fill="#f0d890"/>
<rect x="6" y="3" width="3" height="2" fill="#2aa84a"/><rect x="17" y="4" width="3" height="2" fill="#d84a2a"/>
<rect x="2" y="8" width="27" height="18" fill="#f4dc96"/>
<path d="M8 14 h15 v10 h-2 v-7 h-11 v7 h-2z" fill="#8cc4ec"/>
</svg>
<!-- WMP -->
<svg class="a" style="left:196px;top:734px" width="32" height="32">
<rect x="8" y="4.5" width="20" height="23" fill="#dbeefa" opacity="0.8"/>
<rect x="6" y="4" width="20" height="23" fill="#a9d3f2" stroke="#e0f0fb" stroke-width="0.8"/>
<rect x="4" y="4" width="20" height="23" fill="#8fc4ec"/>
<circle cx="14" cy="14.5" r="9" fill="#f08a26"/><circle cx="14" cy="14.5" r="7.3" fill="#f39c3a"/>
<path d="M11.3 9.5 L19.5 14.5 L11.3 19.5 Z" fill="#fff"/>
</svg>
<!-- Firefox -->
<svg class="a" style="left:259px;top:733px" width="32" height="31">
<defs><radialGradient id="ffo" cx="40%" cy="60%" r="60%"><stop offset="0" stop-color="#f7a21c"/><stop offset="0.6" stop-color="#ef6a1c"/><stop offset="1" stop-color="#d8401a"/></radialGradient>
<radialGradient id="ffb" cx="50%" cy="40%" r="60%"><stop offset="0" stop-color="#52a8e8"/><stop offset="1" stop-color="#1d3f9a"/></radialGradient></defs>
<circle cx="16" cy="15.2" r="15" fill="url(#ffo)"/>
<circle cx="18" cy="12.5" r="9.5" fill="url(#ffb)"/>
<path d="M31 14 C31 8 28 4 24 2 C28 6 29 12 27 17 C25 23 18 25 13 22 C9 19 9 14 12 11 L9 9 C6 11 3 8 3 8 C1 14 4 22 10 26 C17 31 28 28 31 18 Z" fill="url(#ffo)"/>
<path d="M29.5 9 C31 13 31 18 29 21" fill="none" stroke="#f8d030" stroke-width="2"/>
<path d="M3 8 C5 4 9 2 12 3 C9 4 8 6 8 8" fill="#f07a20"/>
</svg>
<!-- Notepad -->
<svg class="a" style="left:320px;top:732px" width="34" height="32">
<path d="M14 3 L30 5 L31 27 L22 30 Z" fill="#f4f6f8" stroke="#b8c4cc" stroke-width="0.6"/>
<path d="M30 5 L31 27 L29 28 L28.5 6 Z" fill="#c8a860"/>
<path d="M14 3 L29 6 L22 29 L2 24 Z" fill="url(#npg)"/>
<defs><linearGradient id="npg" x1="0" y1="1" x2="1" y2="0"><stop offset="0" stop-color="#3aa0c8"/><stop offset="0.5" stop-color="#8ed0e8"/><stop offset="1" stop-color="#d8f0f8"/></linearGradient></defs>
<path d="M14.5 2.5 L29 5.5" stroke="#6a7a88" stroke-width="2" stroke-dasharray="1 1"/>
</svg>
<!-- Chrome btn -->
<div class="a" style="left:370px;top:729px;width:58px;height:38px;border:1px solid rgba(200,235,255,0.55);border-radius:3px;background:linear-gradient(rgba(255,255,255,0.32),rgba(255,255,255,0.1))"></div>
<svg class="a" style="left:384px;top:733px" width="30" height="30">
<circle cx="15" cy="15" r="14" fill="#dd4b39"/>
<path d="M15 15 L3 22 A14 14 0 0 0 20 28.2z" fill="#1aa260"/>
<path d="M15 15 L20 28.2 A14 14 0 0 0 28.9 13.5 L15 8z" fill="#ffce44"/>
<path d="M15 15 L27.5 8.5 L15 8 L3 22z" fill="#dd4b39"/>
<circle cx="15" cy="15" r="6.5" fill="#fff"/><circle cx="15" cy="15" r="5" fill="#4a8af4"/>
</svg>
<!-- Teams btn -->
<div class="a" style="left:432px;top:729px;width:54px;height:38px;border:1px solid rgba(220,240,255,0.7);border-radius:3px;background:linear-gradient(rgba(255,255,255,0.55),rgba(255,255,255,0.25))"></div>
<div class="a" style="left:487px;top:729px;width:4px;height:38px;border:1px solid rgba(220,240,255,0.5);border-left:none;border-radius:0 3px 3px 0"></div>
<svg class="a" style="left:441px;top:731px" width="36" height="34">
<circle cx="18" cy="7" r="5" fill="#7b83eb"/><circle cx="27" cy="9" r="3.5" fill="#5059c9"/>
<rect x="22" y="14" width="10" height="14" rx="3" fill="#5059c9"/>
<rect x="11" y="13" width="15" height="19" rx="4" fill="#7b83eb"/>
<rect x="4" y="11" width="15" height="15" rx="1.5" fill="#4b53bc"/>
<path d="M7.5 14.5 h8 M11.5 14.5 v9" stroke="#fff" stroke-width="2.2"/>
<circle cx="27" cy="27" r="5" fill="#fff"/><circle cx="27" cy="27" r="4" fill="#d0021b"/>
</svg>
<!-- Paint btn -->
<div class="a" style="left:494px;top:729px;width:58px;height:38px;border:1px solid rgba(200,235,255,0.55);border-radius:3px;background:linear-gradient(rgba(255,255,255,0.3),rgba(255,255,255,0.08))"></div>
<svg class="a" style="left:507px;top:732px" width="34" height="32">
<path d="M3 18 q0 -10 12 -11 q10 0 10 7 q0 4 -4 4 q-3 0 -3 3 q0 4 -4 5 q-11 1 -11 -8z" fill="#e8eef4" stroke="#9ab" stroke-width="0.6"/>
<circle cx="9" cy="17" r="2.3" fill="#e04030"/><circle cx="12" cy="11.5" r="2.2" fill="#40b040"/><circle cx="18" cy="10.5" r="2.2" fill="#f0b020"/><circle cx="12" cy="22" r="2" fill="#4080e0"/>
<path d="M16 30 L30 4" stroke="#e8a040" stroke-width="2.5"/><path d="M27 8 L31 1" stroke="#c07020" stroke-width="3.5"/>
</svg>
<!-- tray -->
<svg class="a" style="left:1005px;top:737px" width="18" height="16">
<rect x="1.5" y="6.5" width="15" height="8" rx="1.2" fill="#d8dde4" stroke="#7f8c9a" stroke-width="0.8"/>
<path d="M3.5 9h11M3.5 11h11M5 13h8" stroke="#8a96a4" stroke-width="0.8" stroke-dasharray="1 1"/><path d="M9 6.5 q0 -3 5 -4.5" stroke="#c8d0d8" fill="none" stroke-width="0.9"/>
</svg>
<div class="a" style="left:1034px;top:732px;width:32px;height:32px;border-radius:50%;background:radial-gradient(circle at 50% 40%,#1a3f80,#0a1a3a 80%);border:2px solid #3a7ad0"></div>
<div class="a" style="left:1034px;top:732px;width:32px;height:32px;text-align:center;line-height:32px;color:#fff;font-size:26px;font-weight:bold">?</div>
<svg class="a" style="left:1077px;top:737px" width="22" height="20">
<circle cx="12" cy="4" r="3" fill="#7b83eb"/><circle cx="17" cy="5" r="2.3" fill="#5059c9"/>
<rect x="9" y="8" width="10" height="10" rx="3" fill="#7b83eb"/><rect x="2" y="6" width="10" height="10" rx="1" fill="#4b53bc"/>
<path d="M4.5 8.5 h5 M7 8.5 v6" stroke="#fff" stroke-width="1.5"/><circle cx="16" cy="15" r="3.5" fill="#d0021b"/>
</svg>
<svg class="a" style="left:1101px;top:736px" width="22" height="22">
<rect x="5" y="3" width="14" height="17" fill="#5aa0e0" stroke="#d0e4f4" stroke-width="1"/>
<path d="M1 10 q9 -10 20 -2" stroke="#e8b030" stroke-width="2" fill="none"/><path d="M8 7h4v4h-4zM13 7h4v4h-4zM8 12h4v4h-4zM13 12h4v4h-4z" fill="#e8f0f8" opacity="0.7"/>
</svg>
<svg class="a" style="left:1125px;top:736px" width="22" height="22">
<ellipse cx="12" cy="11" rx="8" ry="9" transform="rotate(-35 12 11)" fill="#111" stroke="#ddd" stroke-width="1.2"/><path d="M4 16 l8 -5" stroke="#eee" stroke-width="1.2"/><circle cx="5" cy="16" r="2" fill="#ccc"/>
</svg>
<svg class="a" style="left:1149px;top:738px" width="20" height="20">
<circle cx="10" cy="10" r="8" fill="#e8d48a" stroke="#b8a050" stroke-width="0.8"/><circle cx="10" cy="10" r="3.5" fill="#f4f0e0" stroke="#999" stroke-width="0.6"/><circle cx="10" cy="10" r="1.3" fill="#666"/>
</svg>
<svg class="a" style="left:1175px;top:738px" width="18" height="20">
<path d="M4 7 h3 l5 -5 v16 l-5 -5 h-3z" fill="#f0f0f0"/>
</svg>
<svg class="a" style="left:1197px;top:735px" width="22" height="24">
<path d="M4 3 v19" stroke="#eee" stroke-width="1.5"/><path d="M5 4 h11 l-2 4 l2 4 h-11z" fill="#f4f4f4"/>
<circle cx="15" cy="16" r="5" fill="#e03030"/><path d="M12.5 13.5l5 5M17.5 13.5l-5 5" stroke="#fff" stroke-width="1.4"/>
</svg>
<div class="a" style="left:1223px;top:738px;width:19px;height:19px;background:linear-gradient(#f0902a,#d86010);border-radius:2px"></div>
<svg class="a" style="left:1223px;top:738px" width="19" height="19"><path d="M6 14 h8 M8 10 q2 -3 0 -5 M11 10 q2 -3 0 -5" stroke="#fff" stroke-width="1.3" fill="none"/></svg>
<svg class="a" style="left:1245px;top:735px" width="22" height="24">
<rect x="8" y="7" width="12" height="11" fill="none" stroke="#f0f0f0" stroke-width="1.5"/><path d="M11 21h6M14 18v3" stroke="#f0f0f0" stroke-width="1.5"/>
<path d="M3 2 v9 M6 2 v9 M2 11 h5 v3 h-5z" stroke="#f0f0f0" stroke-width="1.2" fill="#f0f0f0"/>
</svg>
<div class="a" style="left:1270px;top:733px;width:82px;text-align:center;color:#fff;font-size:12px;line-height:17px">11:25<br>16-02-2021</div>
<div class="a" style="left:1351px;top:729px;width:15px;height:39px;border-left:1px solid rgba(180,220,250,0.5);background:linear-gradient(90deg,rgba(255,255,255,0.15),rgba(255,255,255,0.05))"></div>
</body></html>
